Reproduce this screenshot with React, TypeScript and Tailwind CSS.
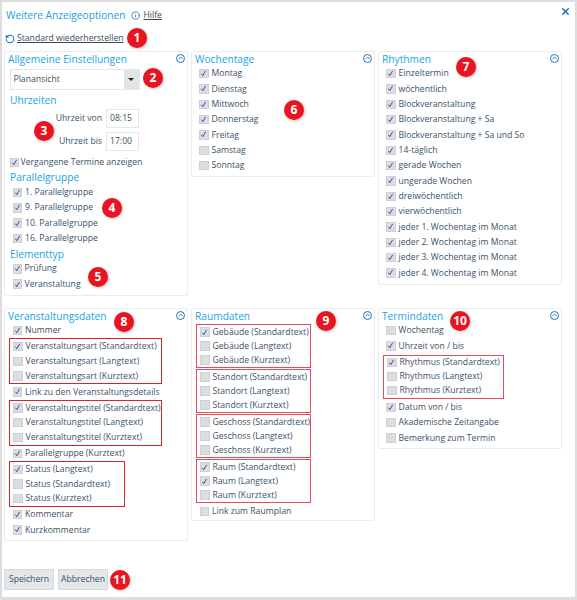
import React from "react";
import { X, RotateCcw, Info, ChevronUp } from "lucide-react";

type Item = [string, boolean];

function Check({ on }: { on: boolean }) {
  return (
    <span className="w-[9.5px] h-[9.5px] shrink-0 bg-[#dcdde1] border border-[#cfd0d4] flex items-center justify-center">
      {on && (
        <svg width="7" height="7" viewBox="0 0 8 8">
          <path d="M1.5 4.2 L3.2 6.5 L6.4 1" fill="none" stroke="#2a4f9e" strokeWidth="1.1" />
        </svg>
      )}
    </span>
  );
}

function Row({ label, on, gap = "gap-[3px]", ml = "ml-0" }: { label: string; on: boolean; gap?: string; ml?: string }) {
  return (
    <div className={`h-[15.33px] flex items-center whitespace-nowrap ${gap} ${ml}`}>
      <Check on={on} />
      <span className="text-[8.65px] text-[#3a5268] leading-none">{label}</span>
    </div>
  );
}

function Rows({ items, gap, ml }: { items: Item[]; gap?: string; ml?: string }) {
  return (
    <>
      {items.map(([l, on]) => (
        <Row key={l} label={l} on={on} gap={gap} ml={ml} />
      ))}
    </>
  );
}

function Heading({ children, cls = "" }: { children: React.ReactNode; cls?: string }) {
  return <div className={`text-[10.2px] leading-[14px] font-medium text-[#22a3e2] ${cls}`}>{children}</div>;
}

function Collapse() {
  return (
    <span className="absolute right-[1.5px] top-[1.5px] w-[9.5px] h-[9.5px] rounded-full border border-[#2a74b5] flex items-center justify-center">
      <ChevronUp size={8} strokeWidth={3} className="text-[#2a74b5]" />
    </span>
  );
}

function Badge({ n, x, y }: { n: number; x: number; y: number }) {
  return (
    <span
      className="absolute w-[20px] h-[20px] rounded-full bg-[#e8141f] text-white text-[12px] font-bold flex items-center justify-center shadow-[1px_1px_3px_rgba(0,0,0,0.25)]"
      style={{ left: x - 10, top: y - 10 }}
    >
      {n}
    </span>
  );
}

function RedBox({ items, w, ml = "ml-[1px]", tight = false }: { items: Item[]; w: string; ml?: string; tight?: boolean }) {
  return (
    <div
      className={`border flex flex-col justify-center ${w} ${ml} pl-[3px] ${
        tight ? "h-[44px] my-[1px] border-[#ea4a55]" : "h-[46px] border-[#e0202c]"
      }`}
    >
      <Rows items={items} />
    </div>
  );
}

function Panel({ h, children }: { h: string; children: React.ReactNode }) {
  return (
    <div className={`relative w-[183.5px] ${h} border border-[#eaecee] rounded-[2px] bg-white px-[3px] shrink-0`}>
      <Collapse />
      {children}
    </div>
  );
}

function TimeRow({ label, value }: { label: string; value: string }) {
  return (
    <div className="flex items-center justify-end w-[131px] h-[23px]">
      <span className="text-[8.65px] text-[#3a5268] mr-[4px]">{label}</span>
      <span className="w-[33px] h-[19px] border border-[#e4e6e8] text-[8.65px] text-[#3a5268] flex items-center pl-[3px]">{value}</span>
    </div>
  );
}

export default function App() {
  return (
    <div
      className="relative w-[577px] h-[600px] overflow-hidden bg-white border-x-2 border-t-2 border-[#dedede]"
      style={{ fontFamily: '"Open Sans", sans-serif' }}
    >
      <div className="h-[23px] flex items-center pl-[4px] pt-[4px] gap-[4px]">
        <span className="text-[10.2px] font-medium text-[#22a0de]">Weitere Anzeigeoptionen</span>
        <Info size={9} strokeWidth={2} className="text-[#1f6fa8] ml-[1px]" />
        <a className="text-[8.65px] text-[#3a4a58] underline">Hilfe</a>
      </div>
      <X size={11} strokeWidth={3} className="absolute right-[4px] top-[4px] text-[#1f6fa8]" />
      <div className="h-[26px] flex items-center pl-[3px] gap-[2px] pt-[1px]">
        <RotateCcw size={10} strokeWidth={2.5} className="text-[#1f6fa8]" />
        <a className="text-[8.65px] text-[#3a4a58] underline">Standard wiederherstellen</a>
      </div>

      <div className="flex gap-[3.5px] pl-[2px] h-[257px]">
        <Panel h="h-[245px]">
          <Heading>Allgemeine Einstellungen</Heading>
          <div className="ml-[1.5px] mt-[3px] w-[130px] h-[21px] border border-[#e4e6e8] flex items-center justify-between">
            <span className="text-[8.65px] text-[#3a5268] pl-[3px]">Planansicht</span>
            <span className="w-[15px] h-full bg-[#e2e4e6] flex items-center justify-center">
              <span className="w-0 h-0 border-x-[3px] border-x-transparent border-t-[3px] border-t-[#222]" />
            </span>
          </div>
          <Heading cls="ml-[2px] mt-[3px]">Uhrzeiten</Heading>
          <TimeRow label="Uhrzeit von" value="08:15" />
          <TimeRow label="Uhrzeit bis" value="17:00" />
          <div className="mt-[2px]">
            <Row label="Vergangene Termine anzeigen" on={true} gap="gap-[1.5px]" ml="ml-[1.5px]" />
          </div>
          <Heading cls="ml-[2px] -mt-[0.5px]">Parallelgruppe</Heading>
          <div className="mt-[1px]">
            <Rows ml="ml-[4.5px]" items={[["1. Parallelgruppe", true], ["9. Parallelgruppe", true], ["10. Parallelgruppe", true], ["16. Parallelgruppe", true]]} />
          </div>
          <Heading cls="ml-[2px] mt-[1px]">Elementtyp</Heading>
          <Rows ml="ml-[4.5px]" gap="gap-[2.5px]" items={[["Prüfung", true], ["Veranstaltung", true]]} />
        </Panel>
        <Panel h="h-[126px]">
          <Heading>Wochentage</Heading>
          <div className="ml-[4px]">
            <Rows items={[["Montag", true], ["Dienstag", true], ["Mittwoch", true], ["Donnerstag", true], ["Freitag", true], ["Samstag", false], ["Sonntag", false]]} />
          </div>
        </Panel>
        <Panel h="h-[234px]">
          <Heading>Rhythmen</Heading>
          <div className="ml-[4px]">
            <Rows items={[["Einzeltermin", true], ["wöchentlich", true], ["Blockveranstaltung", true], ["Blockveranstaltung + Sa", true], ["Blockveranstaltung + Sa und So", true], ["14-täglich", true], ["gerade Wochen", true], ["ungerade Wochen", true], ["dreiwöchentlich", true], ["vierwöchentlich", true], ["jeder 1. Wochentag im Monat", true], ["jeder 2. Wochentag im Monat", true], ["jeder 3. Wochentag im Monat", true], ["jeder 4. Wochentag im Monat", true]]} />
          </div>
        </Panel>
      </div>

      <div className="flex gap-[3.5px] pl-[2px]">
        <Panel h="h-[233px]">
          <Heading>Veranstaltungsdaten</Heading>
          <Rows ml="ml-[4.5px]" items={[["Nummer", true]]} />
          <RedBox w="w-[153px]" items={[["Veranstaltungsart (Standardtext)", true], ["Veranstaltungsart (Langtext)", false], ["Veranstaltungsart (Kurztext)", false]]} />
          <Rows ml="ml-[4.5px]" items={[["Link zu den Veranstaltungsdetails", true]]} />
          <RedBox w="w-[153px]" items={[["Veranstaltungstitel (Standardtext)", true], ["Veranstaltungstitel (Langtext)", false], ["Veranstaltungstitel (Kurztext)", false]]} />
          <Rows ml="ml-[4.5px]" items={[["Parallelgruppe (Kurztext)", true]]} />
          <RedBox w="w-[116px]" items={[["Status (Langtext)", true], ["Status (Standardtext)", false], ["Status (Kurztext)", false]]} />
          <Rows ml="ml-[4.5px]" items={[["Kommentar", true], ["Kurzkommentar", true]]} />
        </Panel>
        <Panel h="h-[213px]">
          <Heading>Raumdaten</Heading>
          <RedBox tight w="w-[115px]" items={[["Gebäude (Standardtext)", true], ["Gebäude (Langtext)", false], ["Gebäude (Kurztext)", false]]} />
          <RedBox tight w="w-[115px]" items={[["Standort (Standardtext)", false], ["Standort (Langtext)", false], ["Standort (Kurztext)", false]]} />
          <RedBox tight w="w-[115px]" items={[["Geschoss (Standardtext)", false], ["Geschoss (Langtext)", false], ["Geschoss (Kurztext)", false]]} />
          <RedBox tight w="w-[115px]" items={[["Raum (Standardtext)", true], ["Raum (Langtext)", true], ["Raum (Kurztext)", false]]} />
          <Rows ml="ml-[4.5px]" items={[["Link zum Raumplan", false]]} />
        </Panel>
        <Panel h="h-[141px]">
          <Heading>Termindaten</Heading>
          <Rows ml="ml-[4px]" items={[["Wochentag", false], ["Uhrzeit von / bis", true]]} />
          <RedBox tight w="w-[121px]" items={[["Rhythmus (Standardtext)", true], ["Rhythmus (Langtext)", false], ["Rhythmus (Kurztext)", false]]} />
          <Rows ml="ml-[4px]" items={[["Datum von / bis", true], ["Akademische Zeitangabe", false], ["Bemerkung zum Termin", false]]} />
        </Panel>
      </div>

      <div className="flex gap-[4px] pl-[2px] mt-[28px]">
        <button className="w-[50px] h-[21px] bg-[#e3e7ea] border border-[#d6dadd] text-[8.65px] text-[#3a5268]">Speichern</button>
        <button className="w-[50px] h-[21px] bg-[#e3e7ea] border border-[#d6dadd] text-[8.65px] text-[#3a5268]">Abbrechen</button>
      </div>
      <div className="absolute left-0 right-0 bottom-0 h-[3px] bg-[#dedede]" />

      <Badge n={1} x={135} y={36} />
      <Badge n={2} x={151} y={76} />
      <Badge n={3} x={42} y={129} />
      <Badge n={4} x={110} y={206} />
      <Badge n={5} x={96} y={275} />
      <Badge n={6} x={292} y={108} />
      <Badge n={7} x={464} y={65} />
      <Badge n={8} x={122} y={320} />
      <Badge n={9} x={324} y={319} />
      <Badge n={10} x={458} y={319} />
      <Badge n={11} x={118} y={578} />
    </div>
  );
}
